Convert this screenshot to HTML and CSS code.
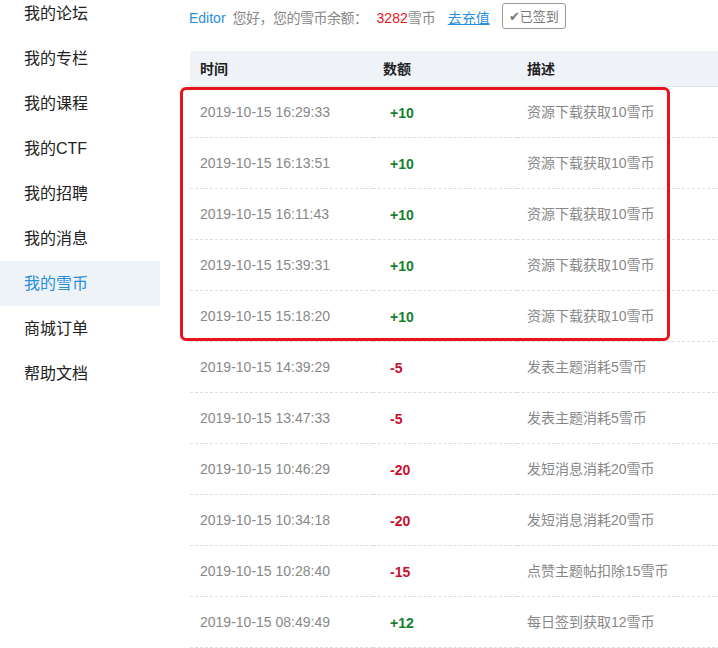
FILE: index.html
```html
<!DOCTYPE html>
<html>
<head>
	<meta charset="utf-8">
	<title>我的雪币</title>
	<link rel="stylesheet" href="styles.css">
</head>
<body>
	<div class="page">
		<ul class="side-nav">
			<li><a href="#">我的论坛</a></li>
			<li><a href="#">我的专栏</a></li>
			<li><a href="#">我的课程</a></li>
			<li><a href="#">我的CTF</a></li>
			<li><a href="#">我的招聘</a></li>
			<li><a href="#">我的消息</a></li>
			<li class="active"><a href="#">我的雪币</a></li>
			<li><a href="#">商城订单</a></li>
			<li><a href="#">帮助文档</a></li>
		</ul>

		<div class="main">
			<div class="balance">
				<a class="user" href="#">Editor</a>
				<span class="hello">您好，您的雪币余额：</span>
				<span class="coins"><em>3282</em>雪币</span>
				<a class="recharge" href="#">去充值</a>
				<button class="signed" type="button">&#10004;已签到</button>
			</div>

			<div class="log-wrap">
				<table class="log">
					<thead>
						<tr><th class="c-time">时间</th><th class="c-amount">数额</th><th class="c-desc">描述</th></tr>
					</thead>
					<tbody>
						<tr><td>2019-10-15 16:29:33</td><td class="amount plus">+10</td><td>资源下载获取10雪币</td></tr>
						<tr><td>2019-10-15 16:13:51</td><td class="amount plus">+10</td><td>资源下载获取10雪币</td></tr>
						<tr><td>2019-10-15 16:11:43</td><td class="amount plus">+10</td><td>资源下载获取10雪币</td></tr>
						<tr><td>2019-10-15 15:39:31</td><td class="amount plus">+10</td><td>资源下载获取10雪币</td></tr>
						<tr><td>2019-10-15 15:18:20</td><td class="amount plus">+10</td><td>资源下载获取10雪币</td></tr>
						<tr><td>2019-10-15 14:39:29</td><td class="amount minus">-5</td><td>发表主题消耗5雪币</td></tr>
						<tr><td>2019-10-15 13:47:33</td><td class="amount minus">-5</td><td>发表主题消耗5雪币</td></tr>
						<tr><td>2019-10-15 10:46:29</td><td class="amount minus">-20</td><td>发短消息消耗20雪币</td></tr>
						<tr><td>2019-10-15 10:34:18</td><td class="amount minus">-20</td><td>发短消息消耗20雪币</td></tr>
						<tr><td>2019-10-15 10:28:40</td><td class="amount minus">-15</td><td>点赞主题帖扣除15雪币</td></tr>
						<tr><td>2019-10-15 08:49:49</td><td class="amount plus">+12</td><td>每日签到获取12雪币</td></tr>
					</tbody>
				</table>
				<!-- highlight box drawn over the first five rows -->
				<div class="mark"></div>
			</div>
		</div>
	</div>
</body>
</html>
```

FILE: styles.css
```css
html, body { margin: 0; padding: 0; overflow: hidden; }
body { font-family: "Liberation Sans", "Noto Sans CJK SC", sans-serif; color: #333; background: #fff; }
a { text-decoration: none; }

.page { display: flex; align-items: flex-start; }

/* Sidebar */
.side-nav { list-style: none; margin: -9px 0 0 0; padding: 0; width: 160px; flex: none; }
.side-nav li { height: 45px; }
.side-nav a { display: block; height: 45px; line-height: 45px; padding-left: 24px; font-size: 16px; color: #222; }
.side-nav li.active { background: #eef3f8; }
.side-nav li.active a { color: #2a8fdb; }

/* Main */
.main { flex: 1; padding-left: 30px; min-width: 0; }

.balance { display: flex; align-items: center; height: 26px; margin-top: 5px; font-size: 14px; line-height: 20px; color: #888; }
.balance .user { color: #2a8fdb; margin-left: -1px; }
.balance .hello { margin-left: 7px; letter-spacing: -0.5px; }
.balance .coins { margin-left: 9px; color: #888; }
.balance .coins em { font-style: normal; color: #e8141b; }
.balance .recharge { margin-left: 12px; color: #2a8fdb; text-decoration: underline; }
.balance .signed { margin-left: 12px; margin-top: -5px; width: 64px; height: 26px; padding: 0; border: 1px solid #999; border-radius: 3px; background: #fff; color: #777; font-family: inherit; font-size: 13px; }

.log-wrap { position: relative; margin-top: 20px; }
.log { border-collapse: collapse; width: 560px; font-size: 14px; line-height: 20px; }
.log th { height: 35px; text-align: left; padding: 0 10px; font-weight: bold; color: #222; background: #eff3f7; border-bottom: 1px solid #dde2e8; }
.log .c-time { width: 163px; }
.log .c-amount { width: 124px; }
.log td { height: 50px; padding: 0 10px; color: #888; border-bottom: 1px dashed #dedede; }
.log td.amount { height: 48px; padding: 2px 10px 0 17px; font-weight: bold; }
.log td.plus { color: #16802f; }
.log td.minus { color: #c8102e; }

.mark { position: absolute; left: -10px; top: 36px; width: 484px; height: 248px; border: 3px solid #e8141b; border-radius: 6px; }
```
